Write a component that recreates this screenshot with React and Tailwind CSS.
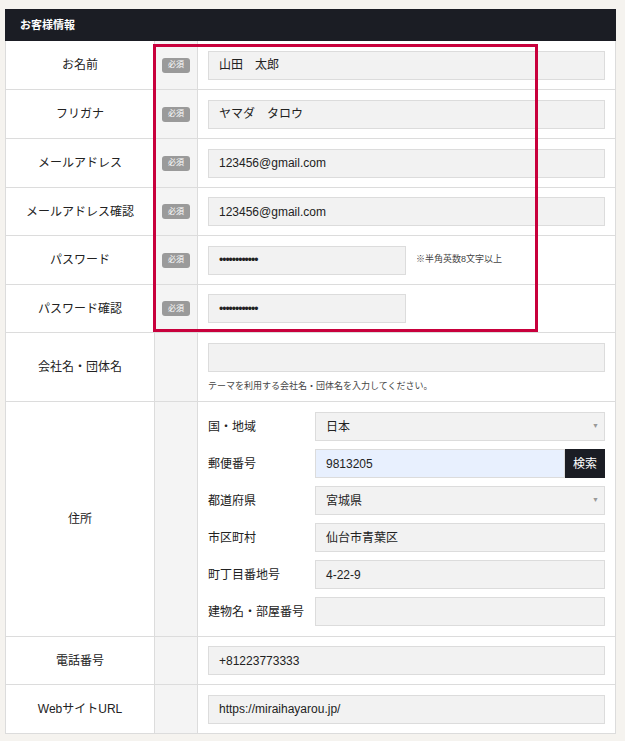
import React from "react";

const font = {
  fontFamily: '"Liberation Sans", "Noto Sans CJK JP", sans-serif',
};

const Badge = () => (
  <span className="inline-flex h-[15px] w-[28px] items-center justify-center rounded-[3px] bg-[#9a9a9a] text-[8px] leading-none text-white">
    必須
  </span>
);

const Field = ({ value, w = "w-full", dots }) => (
  <div
    className={`flex h-[29px] ${w} items-center border border-[#dcdcdc] bg-[#f2f2f2] px-[10px] text-[12px] text-[#222] ${
      dots ? "tracking-[-1px]" : ""
    }`}
  >
    {value}
  </div>
);

const Select = ({ value }) => (
  <div className="flex h-[29px] w-full items-center justify-between border border-[#dcdcdc] bg-[#f2f2f2] pl-[10px] pr-[5px] text-[12px] text-[#222]">
    <span>{value}</span>
    <span className="text-[7px] text-[#999]">▼</span>
  </div>
);

const Row = ({ label, required, h = "h-[49px]", children }) => (
  <div className={`grid ${h} grid-cols-[149px_43px_1fr] border-b border-[#dcdcdc]`}>
    <div className="flex items-center justify-center border-r border-[#dcdcdc] bg-white text-[12px] text-[#222]">
      {label}
    </div>
    <div className="flex items-center justify-center border-r border-[#dcdcdc] bg-[#f4f4f4]">
      {required && <Badge />}
    </div>
    <div className="bg-white px-[10px]">{children}</div>
  </div>
);

const SubRow = ({ label, children }) => (
  <div className="grid grid-cols-[107px_1fr] items-center">
    <div className="text-[12px] text-[#222]">{label}</div>
    {children}
  </div>
);

export default function App() {
  return (
    <div className="min-h-[741px] bg-[#f5f3ef] pt-[9px] pl-[5px]" style={font}>
      <div className="relative w-[611px]">
        <div className="flex h-[32px] items-center bg-[#1b1d24] pl-[15px] text-[11px] font-bold text-white">
          お客様情報
        </div>
        <div className="border-x border-[#dcdcdc]">
          <Row label="お名前" required>
            <div className="flex h-full items-center">
              <Field value="山田　太郎" />
            </div>
          </Row>
          <Row label="フリガナ" required>
            <div className="flex h-full items-center">
              <Field value="ヤマダ　タロウ" />
            </div>
          </Row>
          <Row label="メールアドレス" required>
            <div className="flex h-full items-center">
              <Field value="123456@gmail.com" />
            </div>
          </Row>
          <Row label="メールアドレス確認" required h="h-[48px]">
            <div className="flex h-full items-center">
              <Field value="123456@gmail.com" />
            </div>
          </Row>
          <Row label="パスワード" required>
            <div className="flex h-full items-center gap-[10px]">
              <Field value="••••••••••••" w="w-[198px]" dots />
              <span className="text-[9px] text-[#444]">※半角英数8文字以上</span>
            </div>
          </Row>
          <Row label="パスワード確認" required h="h-[48px]">
            <div className="flex h-full items-center">
              <Field value="••••••••••••" w="w-[198px]" dots />
            </div>
          </Row>
          <Row label="会社名・団体名" h="h-[69px]">
            <div className="pt-[10px]">
              <Field value="" />
              <div className="mt-[8px] text-[9px] text-[#444]">
                テーマを利用する会社名・団体名を入力してください。
              </div>
            </div>
          </Row>
          <Row label="住所" h="h-[235px]">
            <div className="flex flex-col gap-[8px] pt-[10px]">
              <SubRow label="国・地域">
                <Select value="日本" />
              </SubRow>
              <SubRow label="郵便番号">
                <div className="flex h-[29px]">
                  <div className="flex flex-1 items-center border border-[#dcdcdc] bg-[#e8f0fe] px-[10px] text-[12px] text-[#222]">
                    9813205
                  </div>
                  <div className="flex w-[40px] items-center justify-center bg-[#1b1d24] text-[12px] text-white">
                    検索
                  </div>
                </div>
              </SubRow>
              <SubRow label="都道府県">
                <Select value="宮城県" />
              </SubRow>
              <SubRow label="市区町村">
                <Field value="仙台市青葉区" />
              </SubRow>
              <SubRow label="町丁目番地号">
                <Field value="4-22-9" />
              </SubRow>
              <SubRow label="建物名・部屋番号">
                <Field value="" />
              </SubRow>
            </div>
          </Row>
          <Row label="電話番号" h="h-[48px]">
            <div className="flex h-full items-center">
              <Field value="+81223773333" />
            </div>
          </Row>
          <Row label="WebサイトURL">
            <div className="flex h-full items-center">
              <Field value="https://miraihayarou.jp/" />
            </div>
          </Row>
        </div>
        <div className="pointer-events-none absolute left-[148px] top-[35px] h-[288px] w-[385px] border-[3px] border-[#c8003c]" />
      </div>
    </div>
  );
}
